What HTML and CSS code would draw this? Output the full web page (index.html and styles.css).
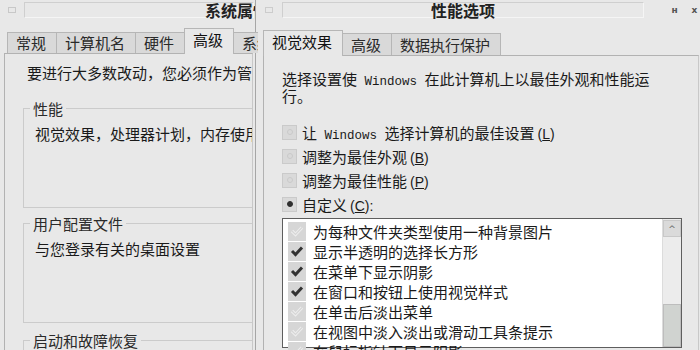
FILE: index.html
```html
<!DOCTYPE html>
<html lang="zh-CN">
<head>
  <meta charset="UTF-8">
  <title>性能选项</title>
  <link rel="stylesheet" href="styles.css">
</head>
<body>
  <div class="desktop">
    <div class="window sys">
      <div class="titlebar">
        <span class="app-icon">
          <svg width="8" height="6" viewBox="0 0 8 6"><rect x="0.5" y="0.5" width="7" height="5" fill="none" stroke="#c8c8c8"/></svg>
        </span>
        <div class="caption caption-end"><span class="caption-text">系统属性</span></div>
      </div>
      <div class="tabs">
        <div class="tab">常规</div>
        <div class="tab">计算机名</div>
        <div class="tab">硬件</div>
        <div class="tab active">高级</div>
        <div class="tab">系统还原</div>
      </div>
      <div class="panel">
        <p class="note">要进行大多数改动，您必须作为管理员登录。</p>
        <fieldset class="group">
          <legend>性能</legend>
          <p>视觉效果，处理器计划，内存使用，以及虚拟内存</p>
        </fieldset>
        <fieldset class="group">
          <legend>用户配置文件</legend>
          <p>与您登录有关的桌面设置</p>
        </fieldset>
        <fieldset class="group last">
          <legend>启动和故障恢复</legend>
          <p>系统启动，系统失败和调试信息</p>
        </fieldset>
      </div>
    </div>

    <div class="window perf">
      <div class="titlebar">
        <span class="app-icon">
          <svg width="8" height="6" viewBox="0 0 8 6"><rect x="0.5" y="0.5" width="7" height="5" fill="none" stroke="#cccccc"/></svg>
        </span>
        <div class="caption caption-center">性能选项</div>
        <div class="caption-buttons">
          <span class="cap-btn">н</span>
          <span class="cap-btn">x</span>
        </div>
      </div>
      <div class="tabs">
        <div class="tab active">视觉效果</div>
        <div class="tab">高级</div>
        <div class="tab">数据执行保护</div>
      </div>
      <div class="panel">
        <p class="intro">选择设置使<span class="latin"> Windows </span>在此计算机上以最佳外观和性能运<br>行。</p>

        <div class="options">
          <div class="radio"><span class="radio-box"><span class="dot"></span></span><span class="label">让<span class="latin"> Windows </span>选择计算机的最佳设置<span class="key">(<u>L</u>)</span></span></div>
          <div class="radio"><span class="radio-box"><span class="dot"></span></span><span class="label">调整为最佳外观<span class="key">(<u>B</u>)</span></span></div>
          <div class="radio"><span class="radio-box"><span class="dot"></span></span><span class="label">调整为最佳性能<span class="key">(<u>P</u>)</span></span></div>
          <div class="radio on"><span class="radio-box"><span class="dot"></span></span><span class="label">自定义<span class="key">(<u>C</u>):</span></span></div>
        </div>

        <div class="list">
          <div class="items">
            <div class="item"><span class="check faint"><svg width="14" height="12" viewBox="0 0 14 12"><path class="ck-outer" d="M2 6 L5.5 9.5 L12 2.5"/><path class="ck-inner" d="M2 6 L5.5 9.5 L12 2.5"/></svg></span>为每种文件夹类型使用一种背景图片</div>
            <div class="item"><span class="check"><svg width="14" height="12" viewBox="0 0 14 12"><path class="ck-dark" d="M2 6 L5.5 9.5 L12 2.5"/></svg></span>显示半透明的选择长方形</div>
            <div class="item"><span class="check"><svg width="14" height="12" viewBox="0 0 14 12"><path class="ck-dark" d="M2 6 L5.5 9.5 L12 2.5"/></svg></span>在菜单下显示阴影</div>
            <div class="item"><span class="check"><svg width="14" height="12" viewBox="0 0 14 12"><path class="ck-dark" d="M2 6 L5.5 9.5 L12 2.5"/></svg></span>在窗口和按钮上使用视觉样式</div>
            <div class="item"><span class="check faint"><svg width="14" height="12" viewBox="0 0 14 12"><path class="ck-outer" d="M2 6 L5.5 9.5 L12 2.5"/><path class="ck-inner" d="M2 6 L5.5 9.5 L12 2.5"/></svg></span>在单击后淡出菜单</div>
            <div class="item"><span class="check faint"><svg width="14" height="12" viewBox="0 0 14 12"><path class="ck-outer" d="M2 6 L5.5 9.5 L12 2.5"/><path class="ck-inner" d="M2 6 L5.5 9.5 L12 2.5"/></svg></span>在视图中淡入淡出或滑动工具条提示</div>
            <div class="item"><span class="check faint"><svg width="14" height="12" viewBox="0 0 14 12"><path class="ck-outer" d="M2 6 L5.5 9.5 L12 2.5"/><path class="ck-inner" d="M2 6 L5.5 9.5 L12 2.5"/></svg></span>在鼠标指针下显示阴影</div>
          </div>
          <div class="scrollbar">
            <div class="sb-up">^</div>
            <div class="sb-track"></div>
            <div class="sb-thumb"></div>
          </div>
        </div>
      </div>
    </div>
  </div>
</body>
</html>
```

FILE: styles.css
```css
body {
  margin: 0;
  font-family: "Noto Sans CJK SC", sans-serif;
  font-size: 15px;
  color: #1a1a1a;
  background: #e6e6e6;
}

.desktop {
  position: relative;
  width: 700px;
  height: 350px;
  overflow: hidden;
}

/* windows sit on the desktop at their own place */
.window {
  position: absolute;
  top: 0;
  height: 350px;
  background: #e8e8e8;
  overflow: hidden;
}

.sys {
  left: 0;
  width: 258px;
}

.perf {
  left: 255px;
  width: 450px;
  border-left: 1px solid #a6a6a6;
}

.titlebar {
  height: 19px;
  display: flex;
  align-items: center;
}

.app-icon {
  width: 24px;
  display: flex;
  justify-content: center;
}

.perf .app-icon {
  width: 26px;
}

.caption {
  height: 14px;
  border: 1px solid #cfcfcf;
  border-right-color: #f5f5f5;
  border-bottom-color: #f5f5f5;
  display: flex;
  align-items: center;
  font-size: 16px;
  font-weight: bold;
  line-height: 14px;
  color: #222;
  white-space: nowrap;
}

.caption-end {
  flex: 1;
  justify-content: flex-end;
  margin-right: 4px;
}

.caption-text {
  margin-right: -16px;
}

.caption-center {
  width: 360px;
  justify-content: center;
}

.caption-buttons {
  display: flex;
  gap: 13px;
  padding-left: 27px;
}

.cap-btn {
  width: 7px;
  font-size: 9px;
  font-weight: bold;
  font-family: "DejaVu Sans", sans-serif;
  color: #555;
  text-align: center;
}

/* tabs */
.tabs {
  display: flex;
  align-items: flex-end;
  height: 25px;
  margin-top: 9px;
  padding-left: 7px;
  position: relative;
  z-index: 1;
}

.perf .tabs {
  margin-top: 11px;
}

.tab {
  height: 20px;
  line-height: 20px;
  padding: 0 10px 0 8px;
  border: 1px solid #b6b6b6;
  border-bottom: none;
  background: #d9d9d9;
  margin-right: -1px;
  white-space: nowrap;
  color: #2a2a2a;
}

.perf .tab {
  height: 21px;
  line-height: 21px;
}

.tab.active,
.perf .tab.active {
  height: 25px;
  line-height: 22px;
  background: #e8e8e8;
  margin-bottom: -1px;
  position: relative;
  z-index: 2;
  color: #111;
}

.panel {
  height: 400px;
  margin: 0 5px 0 4px;
  border: 1px solid #b2b2b2;
  border-right-color: #c8c8c8;
  padding: 10px 0 0 18px;
  overflow: hidden;
  white-space: nowrap;
}

.perf .panel {
  margin: 0 7px;
  padding: 14px 0 0 18px;
}

.note {
  margin: 0 0 0 4px;
  line-height: 17px;
}

/* group boxes */
.group {
  width: 320px;
  height: 108px;
  box-sizing: border-box;
  margin: 19px 0 0;
  padding: 8px 0 0 11px;
  border: 1px solid #cbcbcb;
  min-width: 0;
}

.group + .group {
  margin-top: 7px;
}

.group.last {
  margin-top: 9px;
}

.group legend {
  padding: 0 3px;
  margin-left: -5px;
  line-height: 17px;
  color: #2a2a2a;
}

.group p {
  margin: 0;
  line-height: 17px;
}

/* performance options */
.intro {
  margin: 0;
  line-height: 17px;
}

.latin {
  font-family: "Liberation Mono", monospace;
  font-size: 12.5px;
  line-height: 10px;
  white-space: pre;
}

.key {
  font-family: "Liberation Sans", sans-serif;
  font-size: 14px;
  line-height: 10px;
  margin-left: 3px;
}

.options {
  margin-top: 16px;
}

.radio {
  height: 24px;
  display: flex;
  align-items: center;
  gap: 5px;
}

.label {
  line-height: 17px;
}

.radio-box {
  width: 13px;
  height: 13px;
  border: 1px solid #cacaca;
  background: #d9d9d9;
  display: flex;
  align-items: center;
  justify-content: center;
}

.dot {
  width: 4px;
  height: 4px;
  border-radius: 50%;
  border: 1px solid #c9c9c9;
}

.radio.on .dot {
  background: #2e2e2e;
  border-color: #2e2e2e;
}

.list {
  width: 400px;
  height: 130px;
  box-sizing: border-box;
  margin-top: 2px;
  border: 1px solid #5e5e5e;
  background: #fff;
  display: flex;
}

.items {
  flex: 1;
  padding: 2px 0 0 5px;
}

.item {
  height: 20px;
  display: flex;
  align-items: center;
  gap: 7px;
}

.check {
  width: 18px;
  height: 19px;
  background: #d6d6d6;
  display: flex;
  align-items: center;
  justify-content: center;
}

.ck-dark {
  fill: none;
  stroke: #333;
  stroke-width: 3;
}

.ck-outer {
  fill: none;
  stroke: #eeeeee;
  stroke-width: 3.2;
}

.ck-inner {
  fill: none;
  stroke: #d6d6d6;
  stroke-width: 1.2;
}

.scrollbar {
  width: 18px;
  display: flex;
  flex-direction: column;
  background: #ececec;
  border-left: 1px solid #dcdcdc;
}

.sb-up {
  height: 15px;
  margin-top: 1px;
  background: #dadada;
  border: 1px solid #c8c8c8;
  font-family: "DejaVu Sans", sans-serif;
  font-size: 9px;
  line-height: 17px;
  text-align: center;
  color: #666;
}

.sb-track {
  height: 67px;
}

.sb-thumb {
  flex: 1;
  background: #d0d3d0;
  border: 1px solid #bdbdbd;
}
```
